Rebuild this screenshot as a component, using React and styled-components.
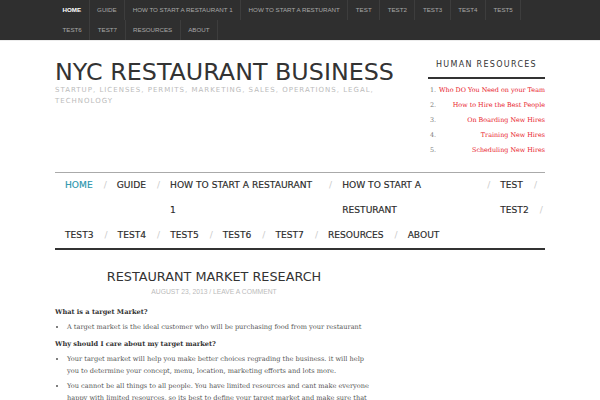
import React from "react";
import styled, { createGlobalStyle } from "styled-components";

const Global = createGlobalStyle`
  html, body { margin: 0; padding: 0; background: #fff; }
  body {
    font-family: "DejaVu Sans", sans-serif;
    color: #333;
    width: 600px;
    height: 400px;
    overflow: hidden;
  }
`;

const TopBar = styled.div`
  background: #2f2f2f;
  height: 40px;
  box-shadow: 0 1px 0 #ececec;
`;

const Wrap = styled.div`
  width: 490px;
  margin: 0 auto;
`;

const TopMenu = styled.ul`
  list-style: none;
  margin: 0;
  padding: 0;
  display: flex;
  flex-wrap: wrap;
`;

const TopItem = styled.li`
  font-family: "Liberation Sans", Arial, sans-serif;
  font-size: 6.2px;
  line-height: 20px;
  text-transform: uppercase;
  padding: 0 7.5px;
  border-right: 1px solid #3d3d3d;
  color: ${(p) => (p.$active ? "#fff" : "#a8a8a8")};
  font-weight: ${(p) => (p.$active ? 700 : 400)};
`;

const Header = styled(Wrap)`
  display: flex;
  justify-content: space-between;
  height: 132px;
`;

const Brand = styled.div`
  padding-top: 17px;
`;

const Title = styled.h1`
  margin: 0;
  font-weight: normal;
  font-size: 23.8px;
  line-height: 30px;
  color: #333;
  white-space: nowrap;
`;

const Tagline = styled.p`
  margin: -2px 0 0;
  width: 330px;
  font-size: 7px;
  line-height: 11px;
  letter-spacing: 1px;
  color: #bbb;
  text-transform: uppercase;
`;

const Widget = styled.aside`
  width: 117px;
  padding-top: 19px;
`;

const WidgetTitle = styled.h3`
  margin: 0;
  font-weight: normal;
  font-size: 8px;
  letter-spacing: 1.3px;
  line-height: 12px;
  text-align: center;
  padding-bottom: 6px;
  border-bottom: 2px solid #333;
  color: #333;
`;

const RankList = styled.ol`
  margin: 4px 0 0;
  padding: 0;
  list-style: none;
`;

const RankRow = styled.li`
  display: flex;
  justify-content: space-between;
  font-family: "DejaVu Serif", serif;
  font-size: 6.4px;
  line-height: 15px;
  padding-left: 2px;
`;

const RankNum = styled.span`
  color: #777;
`;

const RankLink = styled.a`
  color: #e8202a;
  text-decoration: none;
`;

const MainNav = styled.nav`
  width: 490px;
  margin: 0 auto;
  border-top: 1px solid #aaa;
  border-bottom: 2px solid #333;
`;

const NavRow = styled.div`
  display: flex;
  align-items: flex-start;
`;

const NavStack = styled.div`
  display: flex;
  flex-direction: column;
`;

const NavItem = styled.a`
  display: flex;
  align-items: flex-start;
  padding-left: 10px;
  font-size: 9.15px;
  font-weight: normal;
  line-height: 25px;
  color: ${(p) => (p.$active ? "#2a95ad" : "#2a2a2a")};
  text-decoration: none;
  text-transform: uppercase;
  -webkit-text-stroke: 0.15px currentColor;
`;

const NavLabel = styled.span`
  display: block;
  max-width: ${(p) => (p.$max ? `${p.$max}px` : "none")};
`;

const Slash = styled.span`
  margin-left: 11px;
  color: #ccc;
  -webkit-text-stroke: 0;
`;

const Content = styled.main`
  width: 490px;
  margin: 0 auto;
`;

const Article = styled.article`
  width: 318px;
`;

const PostTitle = styled.h2`
  margin: 19px 0 0;
  font-weight: normal;
  font-size: 12.8px;
  line-height: 16px;
  text-align: center;
  color: #333;
`;

const Meta = styled.div`
  margin-top: 2px;
  text-align: center;
  font-family: "Liberation Sans", Arial, sans-serif;
  font-size: 6.75px;
  line-height: 10px;
  color: #bbb;
  text-transform: uppercase;
`;

const Body = styled.div`
  font-family: "DejaVu Serif", serif;
  font-size: 6.6px;
  color: #555;
`;

const Lead = styled.p`
  margin: ${(p) => (p.$first ? "9px" : "5px")} 0 0;
  font-weight: bold;
  line-height: 12px;
  color: #333;
`;

const Bullets = styled.ul`
  margin: 3px 0 0;
  padding-left: 12px;
`;

const Bullet = styled.li`
  line-height: 12px;
  margin-bottom: 3px;
`;

const topItems = [
  "Home", "Guide", "How to start a restaurant 1", "How to start a resturant",
  "Test", "Test2", "Test3", "Test4", "Test5", "Test6", "Test7", "Resources", "About",
];

const ranks = [
  "Who DO You Need on your Team",
  "How to Hire the Best People",
  "On Boarding New Hires",
  "Training New Hires",
  "Scheduling New Hires",
];

function Item({ label, max, active, last }) {
  return (
    <NavItem href="#" $active={active}>
      <NavLabel $max={max}>{label}</NavLabel>
      {!last && <Slash>/</Slash>}
    </NavItem>
  );
}

export default function App() {
  return (
    <>
      <Global />
      <TopBar>
        <Wrap>
          <TopMenu>
            {topItems.map((t, i) => (
              <TopItem key={t} $active={i === 0}>{t}</TopItem>
            ))}
          </TopMenu>
        </Wrap>
      </TopBar>

      <Header>
        <Brand>
          <Title>NYC RESTAURANT BUSINESS</Title>
          <Tagline>Startup, Licenses, Permits, Marketing, Sales, Operations, Legal, Technology</Tagline>
        </Brand>
        <Widget>
          <WidgetTitle>HUMAN RESOURCES</WidgetTitle>
          <RankList>
            {ranks.map((r, i) => (
              <RankRow key={r}>
                <RankNum>{i + 1}.</RankNum>
                <RankLink href="#">{r}</RankLink>
              </RankRow>
            ))}
          </RankList>
        </Widget>
      </Header>

      <MainNav>
        <NavRow>
          <Item label="Home" active />
          <Item label="Guide" />
          <Item label="How to start a restaurant 1" max={148} />
          <Item label="How to start a resturant" max={134} />
          <NavStack>
            <Item label="Test" />
            <Item label="Test2" />
          </NavStack>
        </NavRow>
        <NavRow>
          <Item label="Test3" />
          <Item label="Test4" />
          <Item label="Test5" />
          <Item label="Test6" />
          <Item label="Test7" />
          <Item label="Resources" />
          <Item label="About" last />
        </NavRow>
      </MainNav>

      <Content>
        <Article>
          <PostTitle>RESTAURANT MARKET RESEARCH</PostTitle>
          <Meta>August 23, 2013 / Leave a comment</Meta>
          <Body>
            <Lead $first>What is a target Market?</Lead>
            <Bullets>
              <Bullet>A target market is the ideal customer who will be purchasing food from your restaurant</Bullet>
            </Bullets>
            <Lead>Why should I care about my target market?</Lead>
            <Bullets>
              <Bullet>Your target market will help you make better choices regrading the business. it will help you to determine your concept, menu, location, marketing efforts and lots more.</Bullet>
              <Bullet>You cannot be all things to all people. You have limited resources and cant make everyone happy with limited resources, so its best to define your target market and make sure that your</Bullet>
            </Bullets>
          </Body>
        </Article>
      </Content>
    </>
  );
}
